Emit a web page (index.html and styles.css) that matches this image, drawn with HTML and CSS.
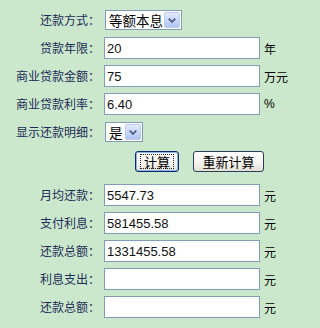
FILE: index.html
```html
<!DOCTYPE html>
<html>
<head>
<meta charset="utf-8">
<link rel="stylesheet" href="styles.css">
</head>
<body>
<div class="form">
  <div class="row">
    <span class="label">还款方式：</span>
    <div class="select sel-wide"><span class="sel-text">等额本息</span><span class="arrow"><svg width="15" height="17" viewBox="0 0 15 17"><polyline points="4,6.5 7.5,10 11,6.5" fill="none" stroke="#4d6185" stroke-width="2"/></svg></span></div>
  </div>
  <div class="row">
    <span class="label">贷款年限：</span>
    <input class="field" type="text" value="20"><span class="unit">年</span>
  </div>
  <div class="row">
    <span class="label">商业贷款金额：</span>
    <input class="field" type="text" value="75"><span class="unit">万元</span>
  </div>
  <div class="row">
    <span class="label">商业贷款利率：</span>
    <input class="field" type="text" value="6.40"><span class="unit latin">%</span>
  </div>
  <div class="row">
    <span class="label">显示还款明细：</span>
    <div class="select sel-narrow"><span class="sel-text">是</span><span class="arrow"><svg width="15" height="17" viewBox="0 0 15 17"><polyline points="4,6.5 7.5,10 11,6.5" fill="none" stroke="#4d6185" stroke-width="2"/></svg></span></div>
  </div>
  <div class="buttons">
    <button class="btn btn-calc focused" type="button"><span class="focus-ring">计算</span></button>
    <button class="btn btn-reset" type="button">重新计算</button>
  </div>
  <div class="row">
    <span class="label">月均还款：</span>
    <input class="field" type="text" value="5547.73"><span class="unit">元</span>
  </div>
  <div class="row">
    <span class="label">支付利息：</span>
    <input class="field" type="text" value="581455.58"><span class="unit">元</span>
  </div>
  <div class="row">
    <span class="label">还款总额：</span>
    <input class="field" type="text" value="1331455.58"><span class="unit">元</span>
  </div>
  <div class="row">
    <span class="label">利息支出：</span>
    <input class="field" type="text" value=""><span class="unit">元</span>
  </div>
  <div class="row">
    <span class="label">还款总额：</span>
    <input class="field" type="text" value=""><span class="unit">元</span>
  </div>
</div>
</body>
</html>
```

FILE: styles.css
```css
html, body {
  margin: 0;
  padding: 0;
  background: #cce8cc;
}
body {
  width: 320px;
  height: 328px;
  overflow: hidden;
  font-family: "Noto Sans CJK SC", "Liberation Sans", sans-serif;
}
.form {
  padding-top: 6px;
  display: flex;
  flex-direction: column;
}
.row {
  height: 28px;
  display: flex;
  align-items: center;
}
.label {
  width: 100px;
  text-align: right;
  font-size: 12px;
  color: #1c2b58;
  line-height: 14px;
  flex-shrink: 0;
}
.field {
  margin: 0 0 0 4px;
  box-sizing: border-box;
  width: 156px;
  height: 22px;
  border: 1px solid #7f9db9;
  background: #fff;
  padding: 0 2px;
  font-family: "Liberation Sans", Arial, sans-serif;
  font-size: 13px;
  color: #111;
  outline: none;
}
.unit {
  margin-left: 4px;
  font-size: 12px;
  color: #000;
}
.unit.latin {
  font-family: "Liberation Sans", Arial, sans-serif;
  font-size: 12px;
}
.select {
  margin-left: 5px;
  box-sizing: border-box;
  height: 20px;
  border: 1px solid #7f9db9;
  background: #fff;
  display: flex;
  align-items: center;
  justify-content: space-between;
  padding: 1px;
}
.sel-wide { width: 77px; }
.sel-narrow { width: 38px; }
.sel-text {
  padding-left: 2px;
  font-size: 13.5px;
  color: #000;
  line-height: 16px;
}
.arrow {
  width: 16px;
  height: 16px;
  box-sizing: border-box;
  border: 1px solid #bccbef;
  border-radius: 2px;
  background: linear-gradient(#e2eafd, #c4d4f7 60%, #b2c5f2);
  display: flex;
  align-items: center;
  justify-content: center;
  overflow: hidden;
}
.arrow svg { display: block; }
.buttons {
  display: flex;
  gap: 14px;
  margin: 5px 0 9px 135px;
  height: 21px;
}
.btn {
  box-sizing: border-box;
  height: 21px;
  border: 1px solid #2b3d5e;
  border-radius: 3px;
  background: linear-gradient(#ffffff, #f4f3ee 60%, #e2ded3);
  font-family: "Noto Sans CJK SC", sans-serif;
  font-size: 13px;
  color: #000;
  padding: 0;
  display: flex;
  align-items: center;
  justify-content: center;
  line-height: 15px;
}
.btn-calc {
  width: 44px;
  border-color: #0a2a6a;
  box-shadow: inset 0 0 0 1px #8fb2ec;
}
.btn-reset {
  width: 71px;
}
.focus-ring {
  border: 1px dotted #222;
  padding: 0 3px;
  line-height: 13px;
}
```
